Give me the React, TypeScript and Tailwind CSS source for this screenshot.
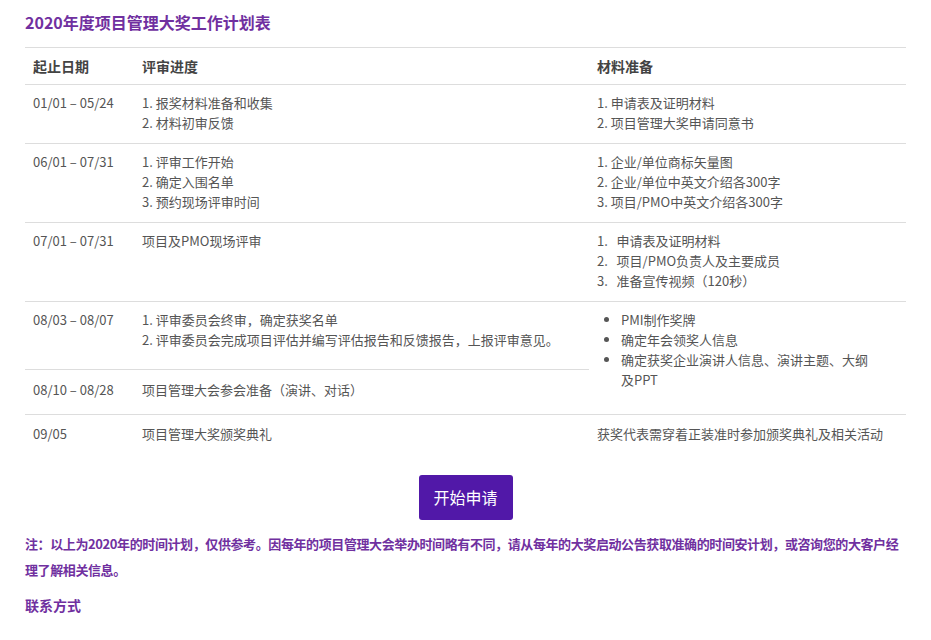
export default function App() {
  const td = 'px-2 py-2 align-top border-t border-[#dddddd]';
  return (
    <div className="px-[25px] pt-[10px] bg-white text-[13px] leading-[20px] text-[#555555]" style={{ fontFamily: '"Noto Sans CJK SC", "Noto Sans", sans-serif' }}>
      <h2 className="text-[16px] leading-[24px] font-bold text-[#7030a0] mb-[13px]">2020年度项目管理大奖工作计划表</h2>
      <table className="w-full border-collapse">
        <thead>
          <tr>
            <th className="text-left font-bold text-[#444] px-2 py-[8px] border-t border-[#dddddd] w-[109px] text-[14px]">起止日期</th>
            <th className="text-left font-bold text-[#444] px-2 py-[8px] border-t border-[#dddddd] w-[455px] text-[14px]">评审进度</th>
            <th className="text-left font-bold text-[#444] px-2 py-[8px] border-t border-[#dddddd] text-[14px]">材料准备</th>
          </tr>
        </thead>
        <tbody>
          <tr>
            <td className={td}>01/01 – 05/24</td>
            <td className={td}>1. 报奖材料准备和收集<br />2. 材料初审反馈</td>
            <td className={td + ' pb-[10px]'}>1. 申请表及证明材料<br />2. 项目管理大奖申请同意书</td>
          </tr>
          <tr>
            <td className={td}>06/01 – 07/31</td>
            <td className={td}>1. 评审工作开始<br />2. 确定入围名单<br />3. 预约现场评审时间</td>
            <td className={td + ' pb-[10px]'}>1. 企业/单位商标矢量图<br />2. 企业/单位中英文介绍各300字<br />3. 项目/PMO中英文介绍各300字</td>
          </tr>
          <tr>
            <td className={td}>07/01 – 07/31</td>
            <td className={td}>项目及PMO现场评审</td>
            <td className={td + ' pb-[10px]'}>1.&nbsp;&nbsp; 申请表及证明材料<br />2.&nbsp;&nbsp; 项目/PMO负责人及主要成员<br />3.&nbsp;&nbsp; 准备宣传视频（120秒）</td>
          </tr>
          <tr>
            <td className={td + ' h-[68px]'}>08/03 – 08/07</td>
            <td className={td}>1. 评审委员会终审，确定获奖名单<br />2. 评审委员会完成项目评估并编写评估报告和反馈报告，上报评审意见。</td>
            <td className={td} rowSpan={2}>
              <ul className="list-disc pl-[24px] pr-[30px]">
                <li>PMI制作奖牌</li>
                <li>确定年会领奖人信息</li>
                <li>确定获奖企业演讲人信息、演讲主题、大纲及PPT</li>
              </ul>
            </td>
          </tr>
          <tr>
            <td className={td + ' py-[10px] h-[45px]'}>08/10 – 08/28</td>
            <td className={td + ' py-[10px]'}>项目管理大会参会准备（演讲、对话）</td>
          </tr>
          <tr>
            <td className={td + ' py-[9px] h-[40px]'}>09/05</td>
            <td className={td + ' py-[9px]'}>项目管理大奖颁奖典礼</td>
            <td className={td + ' py-[9px]'}>获奖代表需穿着正装准时参加颁奖典礼及相关活动</td>
          </tr>
        </tbody>
      </table>
      <div className="flex justify-center mt-[20px]">
        <button className="bg-[#5118a8] text-white text-[16px] rounded-[3px] w-[94px] h-[45px]">开始申请</button>
      </div>
      <p className="mt-[11px] font-bold text-[#7030a0] text-[13px] leading-[26px] tracking-[-0.4px]">注：以上为2020年的时间计划，仅供参考。因每年的项目管理大会举办时间略有不同，请从每年的大奖启动公告获取准确的时间安计划，或咨询您的大客户经理了解相关信息。</p>
      <p className="mt-[12px] font-bold text-[#7030a0] text-[14px] pb-[20px]">联系方式</p>
    </div>
  );
}
